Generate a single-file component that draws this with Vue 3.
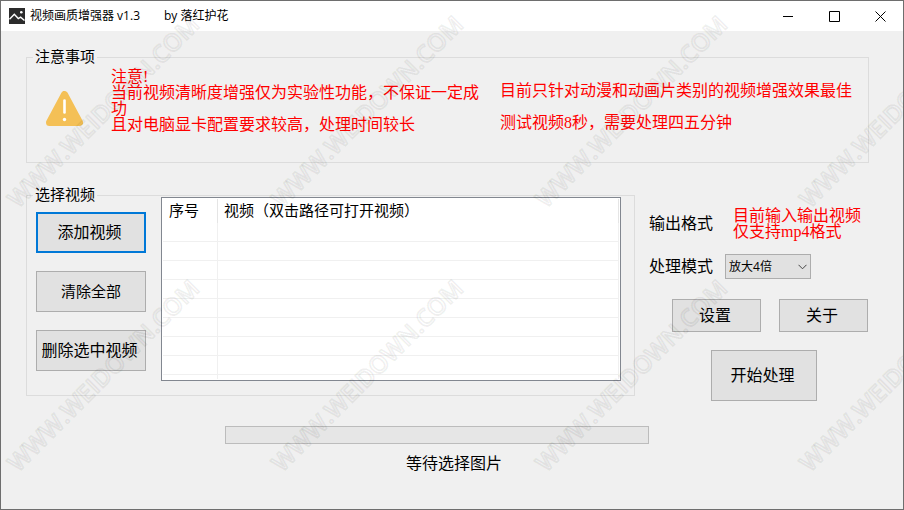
<script setup>
import { ref } from 'vue'

const mode = ref('放大4倍')
const modes = ['放大4倍']
const emptyRows = 8
const marks = [208, 472].flatMap((y) => [17, 281, 545, 809].map((x) => ({ x, y })))
</script>

<template>
  <div class="window">
    <header class="titlebar">
      <svg class="app-icon" viewBox="0 0 16 16" aria-hidden="true">
        <rect width="16" height="16" fill="#2b2b2b" />
        <path d="M0.5 11.2 L5.3 6.3 L9.3 10.5 L11.6 9.2 L15.5 12.5" fill="none" stroke="#fff" stroke-width="1.4" />
        <circle cx="12.3" cy="4.2" r="1.3" fill="#fff" />
      </svg>
      <h1 class="title"><span>视频画质增强器 v1.3</span><span>by 落红护花</span></h1>
      <button class="caption-btn" type="button" aria-label="最小化">
        <svg viewBox="0 0 11 11"><path d="M0 5.5H10" /></svg>
      </button>
      <button class="caption-btn" type="button" aria-label="最大化">
        <svg viewBox="0 0 11 11"><path d="M0.5 0.5H10.5V10.5H0.5Z" /></svg>
      </button>
      <button class="caption-btn" type="button" aria-label="关闭">
        <svg viewBox="0 0 11 11"><path d="M0.5 0.5L10.5 10.5M10.5 0.5L0.5 10.5" /></svg>
      </button>
    </header>

    <main class="client">
      <fieldset class="group notice">
        <legend>注意事项</legend>
        <svg class="warn" viewBox="0 0 37 35" aria-hidden="true">
          <path d="M18.5 3.5 L33.5 31.5 H3.5 Z" fill="#f4c056" stroke="#f4c056" stroke-width="7" stroke-linejoin="round" />
          <path d="M18.5 9.5V21.5" stroke="#fff" stroke-width="2.6" stroke-linecap="round" />
          <circle cx="18.5" cy="28.5" r="1.7" fill="#fff" />
        </svg>
        <p class="warn-text">注意!<br>当前视频清晰度增强仅为实验性功能，不保证一定成功<br>且对电脑显卡配置要求较高，处理时间较长</p>
        <p class="warn-side">目前只针对动漫和动画片类别的视频增强效果最佳<br>测试视频8秒，需要处理四五分钟</p>
      </fieldset>

      <div class="work">
        <fieldset class="group picker">
          <legend>选择视频</legend>
          <div class="actions">
            <button class="btn primary" type="button">添加视频</button>
            <button class="btn small-text" type="button">清除全部</button>
            <button class="btn" type="button">删除选中视频</button>
          </div>
          <div class="list">
            <table>
              <thead>
                <tr><th class="col-no">序号</th><th>视频（双击路径可打开视频）</th></tr>
              </thead>
              <tbody>
                <tr v-for="n in emptyRows" :key="n"><td></td><td></td></tr>
                <tr class="rest"><td></td><td></td></tr>
              </tbody>
            </table>
          </div>
        </fieldset>

        <section class="options">
          <div class="option format">
            <span>输出格式</span>
            <p class="format-note">目前输入输出视频<br>仅支持mp4格式</p>
          </div>
          <div class="option">
            <label for="mode">处理模式</label>
            <div class="select-box">
              <select id="mode" v-model="mode">
                <option v-for="m in modes" :key="m">{{ m }}</option>
              </select>
              <svg viewBox="0 0 9 6" aria-hidden="true"><path d="M0.5 0.8L4.5 4.8L8.5 0.8" /></svg>
            </div>
          </div>
          <div class="pair">
            <button class="btn" type="button">设置</button>
            <button class="btn" type="button">关于</button>
          </div>
          <button class="btn start" type="button">开始处理</button>
        </section>
      </div>

      <div class="status">
        <progress value="0" max="100" aria-labelledby="state"></progress>
        <p id="state">等待选择图片</p>
      </div>
    </main>

    <svg class="watermark" aria-hidden="true">
      <text v-for="m in marks" :key="m.x + '-' + m.y" :transform="`translate(${m.x} ${m.y}) rotate(-45)`">WWW.WEIDOWN.COM</text>
    </svg>
  </div>
</template>

<style>
body {
  margin: 0;
  background: #f0f0f0;
}
</style>

<style scoped>
* {
  box-sizing: border-box;
}

.window {
  position: relative;
  display: flex;
  flex-direction: column;
  min-height: 100vh;
  overflow: hidden;
  border: 1px solid #6e6e6e;
  background: #f0f0f0;
  color: #000;
  font: 400 16px/16px "Liberation Serif", "Noto Sans CJK SC", sans-serif;
}

p,
h1 {
  margin: 0;
}

button,
select {
  font: inherit;
  color: inherit;
}

.titlebar {
  display: flex;
  align-items: center;
  height: 30px;
  padding-left: 8px;
  background: #fff;
}

.app-icon {
  width: 16px;
  height: 16px;
  margin-right: 5px;
}

.title {
  display: flex;
  gap: 24px;
  margin-right: auto;
  font: 400 12px/16px "Open Sans", "Noto Sans CJK SC", sans-serif;
}

.caption-btn {
  display: grid;
  place-items: center;
  width: 46px;
  height: 30px;
  padding: 0;
  border: 0;
  background: transparent;
}

.caption-btn svg {
  width: 11px;
  height: 11px;
  fill: none;
  stroke: #000;
}

.client {
  padding: 26px 34px 24px 25px;
}

.group {
  position: relative;
  display: flex;
  align-items: flex-start;
  min-width: 0;
  margin: 0;
  border: 1px solid #dcdcdc;
}

.group legend {
  position: absolute;
  top: -9px;
  left: 6px;
  padding: 0 2px;
  background: #f0f0f0;
  font-size: 15px;
}

.notice {
  padding: 11px 15px 23px 19px;
}

.warn {
  flex: none;
  width: 37px;
  height: 35px;
  margin: 22px 28px 0 0;
}

.warn-text {
  flex: 0 1 370px;
  margin-right: 19px;
  color: #f00;
}

.warn-side {
  padding-top: 6px;
  color: #f00;
  line-height: 32px;
}

.work {
  display: grid;
  grid-template-columns: minmax(0, 1fr) 219px;
  align-items: start;
  gap: 14px;
  margin-top: 32px;
  padding-right: 1px;
}

.picker {
  gap: 15px;
  padding: 1px 13px 14px 9px;
}

.actions {
  display: grid;
  flex: none;
  gap: 18px;
  width: 110px;
  padding-top: 15px;
}

.btn {
  height: 41px;
  padding: 0 3px 0 0;
  border: 1px solid #adadad;
  background: #e1e1e1;
  white-space: nowrap;
}

.btn.primary {
  border: 2px solid #0078d7;
}

.btn.small-text {
  padding: 0;
  font-size: 15px;
}

.list {
  flex: 1;
  min-width: 0;
  padding: 1px;
  border: 1px solid #828790;
  background: #fff;
}

table {
  width: 100%;
  table-layout: fixed;
  border-collapse: separate;
  border-spacing: 0;
}

th {
  height: 24px;
  padding: 0 6px;
  border-right: 1px solid #e5e5e5;
  font-size: 15px;
  font-weight: 400;
  text-align: left;
  white-space: nowrap;
}

.col-no {
  width: 55px;
}

td {
  height: 19px;
  padding: 0;
  border-right: 1px solid #f0f0f0;
  border-bottom: 1px solid #f0f0f0;
}

.rest td {
  height: 4px;
  border-bottom: 0;
}

.options {
  padding-top: 13px;
}

.option {
  display: flex;
  align-items: center;
  gap: 12px;
}

.format {
  gap: 20px;
  margin-bottom: 14px;
}

.format-note {
  color: #f00;
}

.select-box {
  position: relative;
  width: 86px;
}

select {
  display: block;
  width: 100%;
  height: 25px;
  padding: 0 20px 0 3px;
  border: 1px solid #adadad;
  border-radius: 0;
  background: #e1e1e1;
  appearance: none;
  font: 400 12px/16px "Open Sans", "Noto Sans CJK SC", sans-serif;
}

.select-box svg {
  position: absolute;
  top: 10px;
  right: 4px;
  width: 9px;
  height: 6px;
  fill: none;
  stroke: #444;
  pointer-events: none;
}

.pair {
  display: grid;
  grid-template-columns: 1fr 1fr;
  gap: 18px;
  margin: 20px 0 18px 23px;
}

.pair .btn {
  height: 33px;
}

.start {
  display: block;
  width: 106px;
  height: 51px;
  margin-left: 62px;
}

.status {
  display: grid;
  justify-items: center;
  gap: 12px;
  margin: 25px 0 0 13px;
}

progress {
  display: block;
  width: 424px;
  max-width: 100%;
  height: 18px;
  margin-right: 34px;
  border: 1px solid #bcbcbc;
  background: #e6e6e6;
  appearance: none;
}

progress::-webkit-progress-bar {
  background: #e6e6e6;
}

.watermark {
  position: absolute;
  inset: 0;
  width: 100%;
  height: 100%;
  pointer-events: none;
}

.watermark text {
  fill: rgba(0, 0, 0, 0.02);
  stroke: rgba(0, 0, 0, 0.06);
  stroke-width: 2px;
  stroke-linejoin: round;
  font: 600 24px "Open Sans", sans-serif;
}
</style>
